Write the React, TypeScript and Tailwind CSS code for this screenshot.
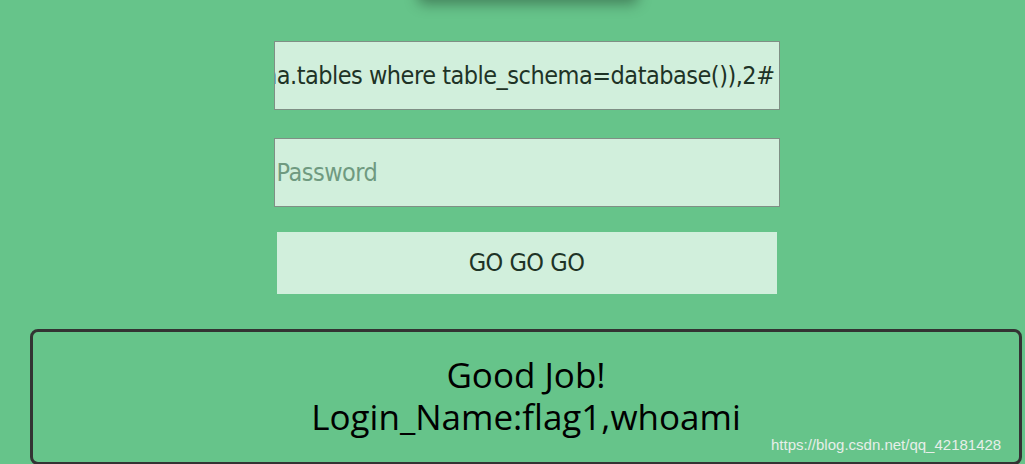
import React from 'react';

const App: React.FC = () => {
  return (
    <div className="relative w-[1025px] h-[464px] overflow-hidden bg-[#66c48a] font-['Noto_Sans',sans-serif]">
      {/* title shadow peeking from above */}
      <div className="absolute left-[418px] top-[-40px] w-[220px] h-[40px] rounded-md shadow-[0_4px_14px_rgba(0,0,0,0.35)] bg-[#66c48a]"></div>

      <div className="flex flex-col items-center pt-[41px] pl-[28px]">
        <div className="w-[506px] h-[69px] bg-[#d1efdc] border border-[#7f8f85] flex items-center justify-end overflow-hidden whitespace-nowrap pr-[4px]">
          <span className="text-[25px] text-[#1e3326] font-['DejaVu_Sans_Condensed','DejaVu_Sans',sans-serif] tracking-[-0.5px]">
            1' union select 1,group_concat(table_name) from information_schema.tables where table_schema=database()),2#
          </span>
        </div>

        <div className="mt-[28px] w-[506px] h-[69px] bg-[#d1efdc] border border-[#7f8f85] flex items-center pl-[2px]">
          <span className="text-[25px] text-[#6f9a80] font-['DejaVu_Sans_Condensed','DejaVu_Sans',sans-serif] tracking-[-0.5px]">Password</span>
        </div>

        <div className="mt-[25px] w-[500px] h-[62px] bg-[#d1efdc] flex items-center justify-center">
          <span className="text-[25px] text-[#1e3326] font-['DejaVu_Sans_Condensed','DejaVu_Sans',sans-serif] tracking-[-0.5px]">GO GO GO</span>
        </div>
      </div>

      <div className="mt-[35px] ml-[30px] w-[992px] h-[136px] border-[3px] border-[#333333] rounded-[8px] flex flex-col items-center pt-[22px] text-black text-[35px] leading-[42px] font-['Open_Sans',sans-serif]">
        <div>Good Job!</div>
        <div>Login_Name:flag1,whoami</div>
      </div>

      <div className="absolute left-[771px] top-[434px] text-[15px] text-[#e6efe9] font-['Liberation_Sans',sans-serif]">
        https://blog.csdn.net/qq_42181428
      </div>
    </div>
  );
};

export default App;
